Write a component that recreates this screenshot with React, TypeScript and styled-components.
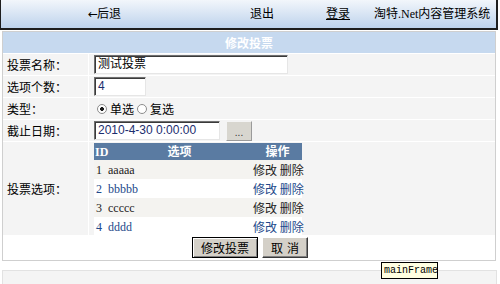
import React from "react";
import styled, { createGlobalStyle } from "styled-components";

const GlobalStyle = createGlobalStyle`
  html, body {
    margin: 0;
    padding: 0;
    background: #fff;
  }
  body {
    width: 500px;
    height: 284px;
    overflow: hidden;
    font-family: "Liberation Serif", "Noto Sans CJK SC", serif;
    font-size: 12px;
    color: #000;
  }
`;

const Page = styled.div`
  position: relative;
  width: 500px;
  height: 284px;
`;

const TopBar = styled.div`
  box-sizing: border-box;
  width: 498px;
  height: 30px;
  padding-left: 87px;
  border-left: 1px solid #1e1e1e;
  border-right: 2px solid #1e1e1e;
  border-bottom: 2px solid #1e1e1e;
  background: linear-gradient(#f2f6fb, #bed3ec);
  display: grid;
  grid-template-columns: 162px 76px 48px auto;
  align-items: center;
  line-height: 14px;
`;

const NavLink = styled.span<{ $underline?: boolean }>`
  color: #000;
  white-space: nowrap;
  text-decoration: ${(p) => (p.$underline ? "underline" : "none")};
`;

const Arrow = styled.span`
  font-family: "DejaVu Sans", sans-serif;
  font-size: 12px;
  letter-spacing: -1px;
`;

const Panel = styled.div`
  box-sizing: border-box;
  width: 494px;
  margin: 1px 0 0 2px;
  border: 1px solid #cfcfcf;
`;

const FormGrid = styled.div`
  display: grid;
  grid-template-columns: 85px 1fr;
  grid-template-rows: 21px 21px 21px 21px 21px 93px 24px;
  gap: 1px;
  background: #fff;
`;

const Title = styled.div`
  grid-column: 1 / span 2;
  background: #c6d9ef;
  color: #fff;
  font-weight: bold;
  font-family: "Noto Sans CJK SC", sans-serif;
  display: flex;
  align-items: center;
  justify-content: center;
`;

const Label = styled.div`
  background: #f4f4f4;
  padding-left: 4px;
  display: flex;
  align-items: center;
  font-family: "Noto Sans CJK SC", sans-serif;
`;

const Field = styled.div<{ $top?: boolean }>`
  background: #f4f4f4;
  padding-left: 5px;
  display: flex;
  align-items: ${(p) => (p.$top ? "flex-start" : "center")};
  padding-top: ${(p) => (p.$top ? "1px" : "0")};
  gap: 6px;
`;

const TextInput = styled.div<{ $w: number; $blue?: boolean }>`
  box-sizing: border-box;
  width: ${(p) => p.$w}px;
  height: 19px;
  padding: 1px 0 0 3px;
  background: #fff;
  border: 1px solid;
  border-color: #6f6f6f #e6e6e6 #e6e6e6 #6f6f6f;
  box-shadow: inset 1px 1px 0 #3a3a3a;
  font-family: "Liberation Sans", "Noto Sans CJK SC", sans-serif;
  font-size: 12px;
  line-height: 15px;
  color: ${(p) => (p.$blue ? "#1b2d6e" : "#000")};
  white-space: nowrap;
`;

const DotButton = styled.div`
  box-sizing: border-box;
  width: 26px;
  height: 20px;
  background: #d8d6cf;
  border: 1px solid;
  border-color: #f4f4f4 #9a9a9a #9a9a9a #f4f4f4;
  font-family: "Liberation Sans", sans-serif;
  font-size: 10px;
  color: #333;
  display: flex;
  align-items: flex-end;
  justify-content: center;
  padding-bottom: 3px;
  line-height: 8px;
`;

const RadioGroup = styled.div`
  display: flex;
  align-items: center;
  padding-left: 3px;
  font-family: "Noto Sans CJK SC", sans-serif;
`;

const Radio = styled.span<{ $checked?: boolean }>`
  box-sizing: border-box;
  width: 10px;
  height: 10px;
  margin-right: 3px;
  border-radius: 50%;
  border: 1px solid #8c8c8c;
  background: ${(p) =>
    p.$checked
      ? "radial-gradient(circle, #1a1a1a 0 1.6px, #fff 2.2px)"
      : "#fff"};
`;

const RadioText = styled.span`
  margin-right: 3px;
`;

const OptTable = styled.table`
  border-collapse: collapse;
  table-layout: fixed;
  width: 208px;
  font-size: 12px;
  font-family: "Liberation Serif", "Noto Sans CJK SC", serif;
`;

const HeadRow = styled.tr`
  height: 17px;
  background: #5a7ba2;
  color: #fff;
  font-weight: bold;
`;

const HeadCell = styled.th<{ $align?: string }>`
  padding: 0 0 0 1px;
  text-align: ${(p) => p.$align || "center"};
  font-weight: bold;
  line-height: 16px;
`;

const BodyRow = styled.tr<{ $alt?: boolean }>`
  height: 19px;
  background: ${(p) => (p.$alt ? "#fff" : "#f4f3f0")};
  color: ${(p) => (p.$alt ? "#22498a" : "#222")};
`;

const BodyCell = styled.td<{ $pad?: number }>`
  padding: 0 0 0 ${(p) => p.$pad ?? 2}px;
  white-space: nowrap;
  line-height: 18px;
`;

const ActionCell = styled.td`
  padding: 0 0 0 1px;
  white-space: nowrap;
  line-height: 18px;
  font-family: "Noto Sans CJK SC", sans-serif;
`;

const ButtonRow = styled.div`
  grid-column: 1 / span 2;
  background: #fff;
  display: flex;
  justify-content: center;
  align-items: flex-start;
  gap: 4px;
  padding: 1px 0 0 2px;
`;

const Button = styled.div<{ $primary?: boolean; $w: number }>`
  box-sizing: border-box;
  width: ${(p) => p.$w}px;
  height: 21px;
  background: #d4d0c8;
  border: 1px solid;
  border-color: ${(p) =>
    p.$primary ? "#000" : "#ffffff #3a3a3a #3a3a3a #ffffff"};
  box-shadow: ${(p) =>
    p.$primary
      ? "inset 1px 1px 0 #fff, inset -1px -1px 0 #808080"
      : "inset -1px -1px 0 #808080"};
  font-family: "Noto Sans CJK SC", sans-serif;
  font-size: 12px;
  letter-spacing: ${(p) => (p.$primary ? "0" : "4px")};
  display: flex;
  align-items: center;
  justify-content: center;
  padding-left: ${(p) => (p.$primary ? "0" : "4px")};
`;

const LowerFrame = styled.div`
  box-sizing: border-box;
  width: 495px;
  height: 20px;
  margin: 9px 0 0 2px;
  background: #f4f4f4;
  border: 1px solid #e2e2e2;
`;

const Tooltip = styled.div`
  position: absolute;
  left: 381px;
  top: 262px;
  box-sizing: border-box;
  width: 57px;
  height: 17px;
  background: #ffffe1;
  border: 1px solid #000;
  font-family: "Liberation Mono", monospace;
  font-size: 10px;
  line-height: 15px;
  padding-left: 2px;
  white-space: nowrap;
`;

const options = [
  { id: 1, name: "aaaaa" },
  { id: 2, name: "bbbbb" },
  { id: 3, name: "ccccc" },
  { id: 4, name: "dddd" },
];

export default function App() {
  return (
    <Page>
      <GlobalStyle />
      <TopBar>
        <NavLink>
          <Arrow>←</Arrow>后退
        </NavLink>
        <NavLink>退出</NavLink>
        <NavLink $underline>登录</NavLink>
        <NavLink>淘特.Net内容管理系统</NavLink>
      </TopBar>
      <Panel>
        <FormGrid>
          <Title>修改投票</Title>

          <Label>投票名称：</Label>
          <Field>
            <TextInput $w={194}>测试投票</TextInput>
          </Field>

          <Label>选项个数：</Label>
          <Field>
            <TextInput $w={52} $blue>
              4
            </TextInput>
          </Field>

          <Label>类型：</Label>
          <Field>
            <RadioGroup>
              <Radio $checked />
              <RadioText>单选</RadioText>
              <Radio />
              <RadioText>复选</RadioText>
            </RadioGroup>
          </Field>

          <Label>截止日期：</Label>
          <Field>
            <TextInput $w={126} $blue>
              2010-4-30 0:00:00
            </TextInput>
            <DotButton>...</DotButton>
          </Field>

          <Label>投票选项：</Label>
          <Field $top>
            <OptTable>
              <colgroup>
                <col style={{ width: 12 }} />
                <col style={{ width: 146 }} />
                <col style={{ width: 50 }} />
              </colgroup>
              <thead>
                <HeadRow>
                  <HeadCell $align="left">ID</HeadCell>
                  <HeadCell>选项</HeadCell>
                  <HeadCell>操作</HeadCell>
                </HeadRow>
              </thead>
              <tbody>
                {options.map((o, i) => (
                  <BodyRow key={o.id} $alt={i % 2 === 1}>
                    <BodyCell>{o.id}</BodyCell>
                    <BodyCell>{o.name}</BodyCell>
                    <ActionCell>修改 删除</ActionCell>
                  </BodyRow>
                ))}
              </tbody>
            </OptTable>
          </Field>

          <ButtonRow>
            <Button $primary $w={66}>
              修改投票
            </Button>
            <Button $w={46}>取消</Button>
          </ButtonRow>
        </FormGrid>
      </Panel>
      <LowerFrame />
      <Tooltip>mainFrame</Tooltip>
    </Page>
  );
}
